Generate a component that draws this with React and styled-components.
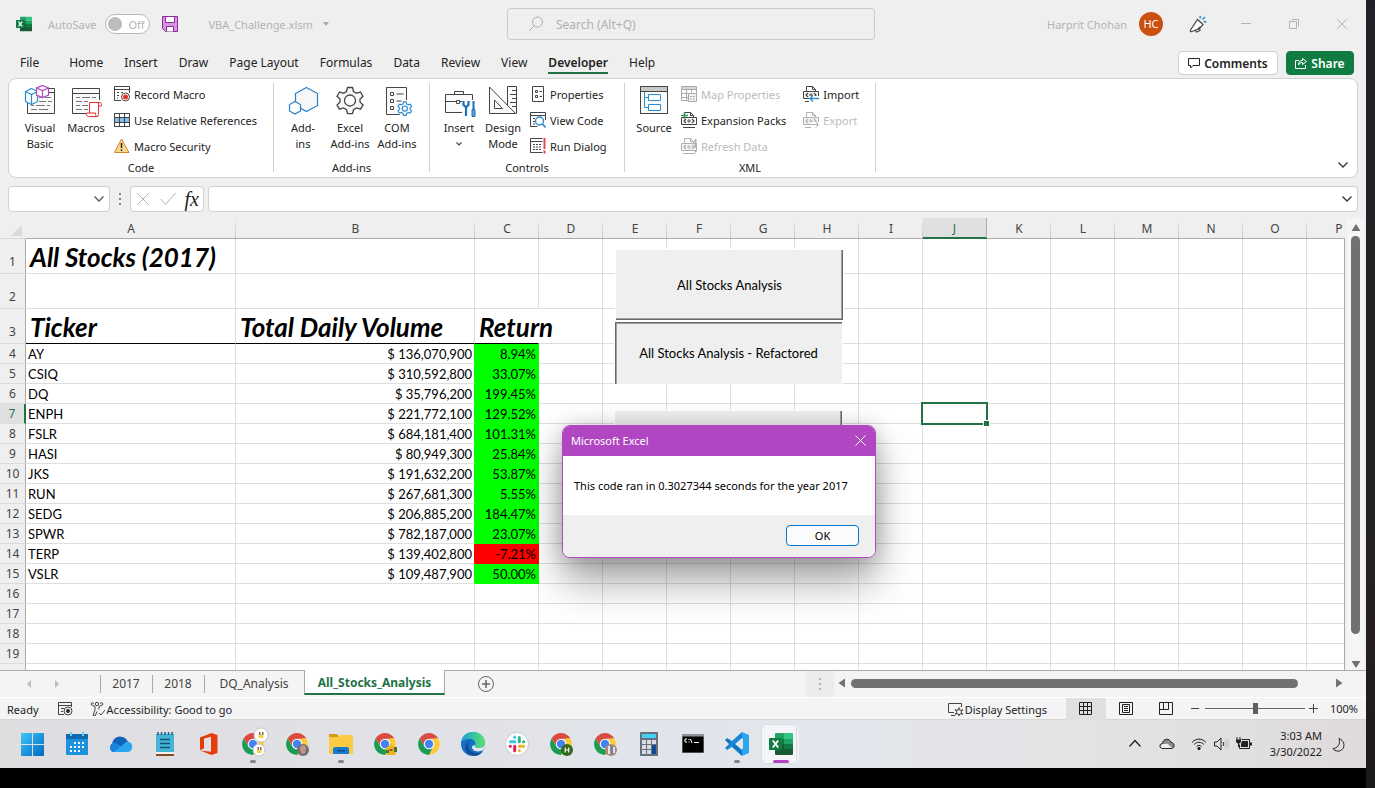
import React from "react";
import styled, { createGlobalStyle, css } from "styled-components";

const ui = `"Noto Sans", "Open Sans", sans-serif`;
const sheetFont = `Lato, "Noto Sans", sans-serif`;

const GlobalStyle = createGlobalStyle`
  *, *::before, *::after { box-sizing: border-box; }
  body { margin: 0; background: #000; font-family: ${ui}; font-size: 11px; color: #222; }
  button, input { font: inherit; color: inherit; margin: 0; padding: 0; border: 0; background: none; }
  button { white-space: nowrap; }
  svg { display: block; flex: none; }
`;

/* ---------- shell ---------- */

const Screen = styled.div`
  display: flex;
  height: 100vh;
  overflow: hidden;
`;

const Desktop = styled.div`
  flex: 1;
  min-width: 0;
  display: flex;
  flex-direction: column;
`;

const ScreenEdge = styled.div`
  width: 9px;
  background: linear-gradient(#202026, #222224 50%, #251f1f 80%, #1b1918);
`;

const Bezel = styled.div`
  height: 20px;
  background: #000;
`;

const Window = styled.main`
  position: relative;
  flex: 1;
  min-height: 0;
  display: flex;
  flex-direction: column;
  background: #efefef;
`;

/* ---------- title bar ---------- */

const TitleBar = styled.header`
  height: 48px;
  padding: 0 0 0 16px;
  display: grid;
  grid-template-columns: 1fr 368px 1fr;
  align-items: center;
  color: #b3b3b3;
  font-size: 12px;
`;

const TitleSide = styled.div`
  display: flex;
  align-items: center;
  ${(p) => p.$end && css`
    justify-content: flex-end;
    padding-right: 16px;
  `}
`;

const AutoSave = styled.label`
  display: flex;
  align-items: center;
  gap: 9px;
  margin: 0 12px 0 16px;
  font-size: 11px;
`;

const Pill = styled.span`
  display: flex;
  align-items: center;
  gap: 6px;
  width: 45px;
  height: 20px;
  padding: 0 2px;
  border: 1px solid #b9b9b9;
  border-radius: 10px;
  background: #fff;
`;

const Knob = styled.input`
  appearance: none;
  width: 14px;
  height: 14px;
  border-radius: 50%;
  background: #bcbcbc;
`;

const FileName = styled.button`
  display: flex;
  align-items: center;
  gap: 10px;
  margin-left: 30px;
  font-size: 11px;
`;

const SearchBox = styled.label`
  display: flex;
  align-items: center;
  gap: 12px;
  height: 32px;
  padding: 0 20px;
  border: 1px solid #c9c9c9;
  border-radius: 4px;
  input { flex: 1; min-width: 0; outline: 0; }
  input::placeholder { color: #b0b0b0; opacity: 1; }
`;

const UserName = styled.span`
  font-size: 11px;
  margin-right: 12px;
`;

const Avatar = styled.span`
  width: 24px;
  height: 24px;
  border-radius: 50%;
  background: #ca5010;
  color: #fff;
  font-size: 11px;
  line-height: 24px;
  text-align: center;
  margin-right: 11px;
`;

const WindowButton = styled.button`
  width: 48px;
  height: 32px;
  display: grid;
  place-items: center;
  &:last-child { width: 16px; margin-left: 16px; }
`;

/* ---------- ribbon ---------- */

const TabRow = styled.nav`
  height: 30px;
  padding: 0 12px 0 10px;
  display: flex;
  align-items: center;
  font-size: 12px;
`;

const RibbonTab = styled.button`
  height: 30px;
  padding: 0 10px;
  margin-right: ${(p) => (p.$first ? 10 : 1)}px;
  span { display: block; padding-top: 2px; line-height: 18px; border-bottom: 2px solid transparent; }
  ${(p) => p.$active && css`
    font-weight: 600;
    span { border-color: #217346; }
  `}
`;

const Spacer = styled.div`
  flex: 1;
`;

const ActionButton = styled.button`
  display: flex;
  align-items: center;
  justify-content: center;
  gap: 4px;
  height: 24px;
  width: ${(p) => (p.$primary ? 68 : 100)}px;
  margin-left: 8px;
  border: 1px solid ${(p) => (p.$primary ? "#107c41" : "#d0d0d0")};
  border-radius: 4px;
  background: ${(p) => (p.$primary ? "#107c41" : "#fff")};
  color: ${(p) => (p.$primary ? "#fff" : "#222")};
  font-weight: 600;
`;

const Ribbon = styled.section`
  position: relative;
  display: flex;
  height: 100px;
  margin: 0 8px 8px;
  padding: 2px 0 0;
  border: 1px solid #d1d1d1;
  border-radius: 8px;
  background: #fff;
`;

const Group = styled.div`
  width: ${(p) => p.$w}px;
  padding-left: ${(p) => p.$pad}px;
`;

const GroupBody = styled.div`
  display: flex;
  height: 79px;
  gap: ${(p) => p.$gap || 0}px;
`;

const GroupLabel = styled.div`
  margin-left: -${(p) => p.$pad}px;
  line-height: 16px;
  text-align: center;
`;

const Divider = styled.div`
  width: 1px;
  margin: 2px 0 5px;
  background: #d1d1d1;
`;

const BigButton = styled.button`
  width: ${(p) => p.$w || 46}px;
  padding-top: 3px;
  display: flex;
  flex-direction: column;
  align-items: center;
  gap: 4px;
  line-height: 16px;
  white-space: pre-line;
  svg { overflow: visible; }
`;

const SmallColumn = styled.div`
  display: flex;
  flex-direction: column;
  margin-left: ${(p) => p.$ml}px;
`;

const SmallButton = styled.button`
  height: 26px;
  display: flex;
  align-items: center;
  gap: 4px;
  color: ${(p) => (p.disabled ? "#bbb" : "#222")};
`;

const Collapse = styled.button`
  position: absolute;
  right: 8px;
  bottom: 8px;
`;

/* ---------- formula bar ---------- */

const FormulaRow = styled.div`
  display: flex;
  align-items: center;
  height: 26px;
  margin: 0 8px 6px;
`;

const Field = styled.div`
  display: flex;
  align-items: center;
  height: 26px;
  padding: 0 4px;
  border: 1px solid #d0d0d0;
  border-radius: 4px;
  background: #fff;
  ${(p) => (p.$w ? css`width: ${p.$w}px;` : css`flex: 1; margin-left: 4px;`)}
  justify-content: ${(p) => p.$justify || "flex-start"};
  input { flex: 1; min-width: 0; outline: 0; }
`;

const Grip = styled.div`
  width: 20px;
  display: grid;
  place-items: center;
`;

const Fx = styled.i`
  font: italic 400 20px/20px "Liberation Serif", serif;
  color: #222;
`;

/* ---------- worksheet ---------- */

const Work = styled.div`
  flex: 1;
  min-height: 0;
  display: flex;
`;

const SheetArea = styled.div`
  position: relative;
  flex: 1;
  min-width: 0;
  overflow: hidden;
  &::after {
    content: "";
    position: absolute;
    top: 20px;
    right: 0;
    bottom: 0;
    border-right: 1px solid #ababab;
  }
`;

const Grid = styled.table`
  table-layout: fixed;
  width: 1371px;
  border-collapse: separate;
  border-spacing: 0;
  font-family: ${sheetFont};
  font-size: 13px;
  color: #000;
  td, th { padding: 0; white-space: nowrap; }
`;

const ColHead = styled.th`
  height: 21px;
  border-bottom: 1px solid #ababab;
  background: linear-gradient(#efefef, #c4c4c4) right / 1px 100% no-repeat #efefef;
  font: 400 12px/18px ${ui};
  color: #444;
  && { padding-top: 2px; }
  ${(p) => p.$active && css`
    background: #e0e0e0;
    border-bottom: 2px solid #217346;
    border-right: 1px solid #ababab;
    color: #217346;
    line-height: 17px;
  `}
`;

const Corner = styled.th`
  height: 21px;
  border-bottom: 1px solid #d8d8d8;
  background: #efefef;
  svg { margin-left: 10px; margin-top: 5px; }
`;

const RowHead = styled.th`
  height: ${(p) => p.$h}px;
  vertical-align: bottom;
  border-right: 1px solid #ababab;
  border-bottom: 1px solid #dcdcdc;
  background: #efefef;
  font: 400 12px/${(p) => (p.$h > 20 ? 22 : 18)}px ${ui};
  color: #444;
  ${(p) => p.$active && css`
    background: #e0e0e0;
    border-right: 2px solid #217346;
    color: #217346;
  `}
`;

const Cell = styled.td`
  position: relative;
  background: ${(p) => p.$fill || "#fff"};
  border-right: 1px solid ${(p) => p.$edge || p.$fill || "#dedede"};
  border-bottom: 1px solid ${(p) => (p.$rule ? "#000" : p.$fill || "#dedede")};
  vertical-align: bottom;
  line-height: 18px;
  text-align: ${(p) => (p.$num ? "right" : "left")};
  && { padding: ${(p) => (p.$title ? "0 4px" : "0 2px")}; }
  ${(p) => p.$title && css`
    font-size: 26px;
    font-weight: 700;
    font-style: italic;
    line-height: 32px;
  `}
  ${(p) => p.$spill && css`z-index: 1;`}
`;

const Selection = styled.span`
  position: absolute;
  inset: -2px;
  z-index: 1;
  border: 2px solid #217346;
  &::after {
    content: "";
    position: absolute;
    right: -4px;
    bottom: -4px;
    width: 7px;
    height: 7px;
    border: 1px solid #fff;
    background: #217346;
  }
`;

const FormButton = styled.button`
  position: absolute;
  z-index: 2;
  left: ${(p) => p.$x}px;
  top: ${(p) => p.$y}px;
  width: ${(p) => p.$w}px;
  height: ${(p) => p.$h}px;
  background: #efefef;
  color: #000;
  font-family: ${sheetFont};
  font-size: 13px;
  outline: 1px solid #fff;
  ${(p) => (p.$pressed
    ? css`box-shadow: inset 1px 1px #696969, inset 2px 2px #a0a0a0;`
    : css`box-shadow: inset -1px -1px #696969, inset -2px -2px #a0a0a0;`)}
`;

const VScroll = styled.div`
  width: 21px;
  padding: 5px 6px 1px;
  display: flex;
  flex-direction: column;
  align-items: center;
  background: linear-gradient(#f5f5f5, #f5f5f5) center / 17px 100% no-repeat;
`;

const VThumb = styled.div`
  flex: 398;
  width: 9px;
  margin-top: 3px;
  border-radius: 5px;
  background: #717171;
`;

const VRest = styled.div`
  flex: 25;
`;

/* ---------- sheet tabs ---------- */

const SheetBar = styled.nav`
  display: flex;
  height: 28px;
  border-top: 1px solid #ababab;
  border-bottom: 1px solid #fff;
  background: #f4f4f4;
  font-size: 12px;
  color: #444;
`;

const SheetNav = styled.div`
  display: flex;
  align-items: center;
  justify-content: center;
  gap: 18px;
  width: 100px;
  padding-right: 14px;
`;

const SheetTab = styled.button`
  width: ${(p) => p.$w}px;
  position: relative;
  line-height: 24px;
  &::before {
    content: "";
    position: absolute;
    left: 0;
    top: 4px;
    height: 18px;
    border-left: 1px solid #ababab;
  }
  ${(p) => p.$active && css`
    height: 25px;
    margin-top: -1px;
    padding-top: 2px;
    line-height: 20px;
    background: #fff;
    border: 1px solid #ababab;
    border-width: 0 1px 2px;
    border-bottom-color: #217346;
    color: #217346;
    font-weight: 700;
    &::before { display: none; }
  `}
`;

const AddSheet = styled.button`
  margin-left: 33px;
  height: 26px;
`;

const Splitter = styled.div`
  width: 28px;
  display: grid;
  place-items: center;
  background: #ececec;
`;

const HScroll = styled.div`
  width: 513px;
  margin-right: 19px;
  padding: 0 3px 2px;
  display: flex;
  align-items: center;
`;

const HThumb = styled.div`
  flex: 447;
  height: 9px;
  margin-left: 4px;
  border-radius: 5px;
  background: #717171;
`;

const HRest = styled.div`
  flex: 36;
`;

/* ---------- status bar ---------- */

const StatusBar = styled.footer`
  height: 22px;
  padding: 0 8px 0 7px;
  display: flex;
  align-items: center;
  background: #f4f4f4;
  border-bottom: 1px solid #d6d6d6;
`;

const StatusItem = styled.button`
  display: flex;
  align-items: center;
  gap: 2px;
  margin-left: ${(p) => p.$ml || 0}px;
`;

const StatusText = styled.span`
  padding-top: 2px;
`;

const ViewButton = styled.button`
  width: 40px;
  height: 22px;
  display: grid;
  place-items: center;
  background: ${(p) => (p.$active ? "#e0e0e0" : "transparent")};
`;

const ViewGroup = styled.div`
  display: flex;
  margin: 0 4px 0 19px;
`;

const ZoomRange = styled.input`
  appearance: none;
  width: 100px;
  height: 12px;
  margin: 0 4px;
  &::-webkit-slider-runnable-track { height: 1px; background: #666; }
  &::-webkit-slider-thumb {
    appearance: none;
    width: 5px;
    height: 11px;
    margin-top: -5px;
    background: #5e5e5e;
  }
`;

const ZoomValue = styled.span`
  width: 40px;
  text-align: right;
`;

/* ---------- dialog ---------- */

const Dialog = styled.section`
  position: absolute;
  z-index: 5;
  left: 562px;
  top: 425px;
  width: 314px;
  border: 1px solid #b146c2;
  border-radius: 8px;
  overflow: hidden;
  background: #fff;
  box-shadow: 0 24px 40px rgba(0, 0, 0, 0.34), 0 2px 22px rgba(0, 0, 0, 0.2);
`;

const DialogTitle = styled.div`
  display: flex;
  align-items: center;
  justify-content: space-between;
  height: 30px;
  padding: 0 9px 2px 8px;
  background: #b146c2;
  color: #fff;
`;

const DialogText = styled.p`
  margin: 0;
  padding: 0 11px;
  line-height: 59px;
  white-space: nowrap;
  color: #000;
`;

const DialogFooter = styled.div`
  display: flex;
  justify-content: flex-end;
  padding: 10px 16px 11px;
  background: #efefef;
`;

const OkButton = styled.button`
  width: 73px;
  height: 21px;
  border: 1px solid #0078d4;
  border-radius: 4px;
  background: #fbfbfb;
  color: #000;
`;

/* ---------- taskbar ---------- */

const Taskbar = styled.nav`
  height: 48px;
  padding: 0 20px 0 11px;
  display: flex;
  align-items: center;
  background: linear-gradient(90deg, #dfdde0, #e1e2e7 30%, #e2e6ed 58%, #e4e4e7 75%, #dfdbdc);
`;

const Task = styled.button`
  position: relative;
  width: 44px;
  height: 48px;
  display: grid;
  place-items: center;
  svg { z-index: 1; overflow: visible; }
  ${(p) => p.$running && css`
    &::after {
      content: "";
      position: absolute;
      bottom: 5px;
      left: ${p.$active ? 14 : 19}px;
      width: ${p.$active ? 16 : 6}px;
      height: 3px;
      border-radius: 2px;
      background: ${p.$active ? "#b146c2" : "#858588"};
    }
  `}
  ${(p) => p.$active && css`
    &::before {
      content: "";
      position: absolute;
      inset: 5px 7px 5px 3px;
      border-radius: 4px;
      background: #f4f5f8;
      box-shadow: 0 0 0 1px #dadce1, 3px 0 0 0 #f0f1f5;
    }
  `}
`;

const Tray = styled.div`
  display: flex;
  align-items: center;
  gap: ${(p) => p.$gap}px;
`;

const Clock = styled.time`
  width: 64px;
  margin: 0 9px 0 5px;
  line-height: 16px;
  text-align: right;
  white-space: pre;
`;

/* ---------- icons ---------- */

const Icon = ({ w = 16, h = w, stroke = "#444", children, ...rest }) => (
  <svg width={w} height={h} viewBox={`0 0 ${w} ${h}`} fill="none" stroke={stroke} aria-hidden="true" {...rest}>
    {children}
  </svg>
);

const Chevron = ({ stroke = "#333" }) => (
  <Icon w={12} h={8} stroke={stroke}><path d="M1.500 1.500 6 6l4.500-4.500" strokeWidth="1.300" /></Icon>
);

const ExcelLogo = ({ size }) => (
  <svg width={size} height={size} viewBox="0 0 24 24" aria-hidden="true">
    <path d="M7 1h8v6H6V2a1 1 0 0 1 1-1z" fill="#21a366" />
    <path d="M15 1h8a1 1 0 0 1 1 1v5h-9z" fill="#33c481" />
    <path d="M6 7h9v5H6z" fill="#107c41" />
    <path d="M15 7h9v5h-9z" fill="#21a366" />
    <path d="M6 12h9v6H6z" fill="#185c37" />
    <path d="M15 12h9v6h-9z" fill="#107c41" />
    <path d="M6 17h18v5a1 1 0 0 1-1 1H7a1 1 0 0 1-1-1z" fill="#185c37" />
    <rect y="6" width="13" height="12" rx="1" fill="#107c41" />
    <path d="m3.800 8.500 5.400 7M9.200 8.500l-5.400 7" stroke="#fff" strokeWidth="1.900" />
  </svg>
);

const SaveIcon = () => (
  <Icon stroke="#8e2a9e">
    <path d="M.5.5h15v15h-12l-3-3z" fill="#d594dd" />
    <path d="M3.500.5h9v6h-9z" fill="#fff" />
    <path d="M4.500 15.500v-5h7v5" fill="#fff" />
  </Icon>
);

const SearchIcon = () => (
  <Icon stroke="#b0b0b0"><circle cx="9.500" cy="6" r="5" /><path d="M6 10 1 15" /></Icon>
);

const PenIcon = () => (
  <Icon w={18} stroke="#444">
    <path d="M8.500 4.500 14 9.500l-3.500 4L3 16.500c-1.500.5-2-.5-1.500-1.500z" fill="#fff" strokeWidth="1.200" />
    <path d="m6 15 1.500 2 3.500-1.500-.5-2.500M8.500 14.500 11 12" strokeWidth="1.200" />
    <path d="M11.500 3.500 11 1M13.500 4.500 16 2M14.500 6.500l3 .5" stroke="#2a8dd4" strokeWidth="1.500" />
  </Icon>
);

const VisualBasicIcon = () => (
  <Icon w={32}>
    <path d="M14 4.500h16.500v25h-27V13" fill="#fafafa" />
    <path d="M25 8.500h5" />
    <path d="M15 13.500h4m2 0h6M15 17.500h7m2 0h4M7 21.500h3m2 0h9m2 0h3M7 25.500h6m2 0h9" stroke="#777" />
    <path d="m7.500 4.500 6 3v10l-6 3-6-3v-10z" fill="#fff" stroke="#2a8dd4" strokeWidth="1.200" />
    <path d="m1.500 7.500 6 3 6-3M7.500 10.500v10" stroke="#2a8dd4" strokeWidth="1.200" />
    <path d="m18.500 1.500 6 2.500v7l-6 2.500-6-2.500V4z" fill="#fff" stroke="#b146c2" strokeWidth="1.200" />
    <path d="m12.500 4 6 2.500 6-2.500M18.500 6.500v7" stroke="#b146c2" strokeWidth="1.200" />
  </Icon>
);

const MacrosIcon = () => (
  <Icon w={32}>
    <path d="M2.500 4.500h27v25h-27z" fill="#fafafa" />
    <path d="M2.500 9.500h27" />
    <path d="M6 13.500h4m2 0h8m2 0h4M6 17.500h6m2 0h6M6 21.500h4m2 0h6M6 25.500h6m2 0h4" stroke="#777" />
    <path d="M31 16h-13v12h-2v5h16z" fill="#fff" stroke="none" />
    <path d="M19.500 29V18.500h9v12c0 3-3 2-3 0v-1.500h-9c0 2 0 3.500 2 3.500h9.500M28.500 22h3c0-2.500 0-3.500-2.500-3.500h-8" stroke="#e8302f" fill="#fff" />
  </Icon>
);

const RecordIcon = () => (
  <Icon>
    <path d="M7 14.500H.5v-14h15V7" /><path d="M0 3.500h15.500M3 6.500h2m2 0h2M3 9.500h2M3 12h1" />
    <circle cx="11.500" cy="11" r="4" fill="#fff" /><circle cx="11.500" cy="11" r="2.500" fill="#e8302f" stroke="none" />
  </Icon>
);

const RelativeIcon = () => (
  <Icon h={14}>
    <path d="M.5.5h15v13H.5z" fill="#fff" />
    <path d="M1 5h14v4H1z" fill="#83beec" stroke="none" />
    <path d="M5.500.5v13M10.500.5v13M.5 4.500h15M.5 9.500h15" />
    <path d="M.5.5h15v13H.5z" />
  </Icon>
);

const WarningIcon = () => (
  <Icon stroke="#d9822b">
    <path d="M7.500 1 15 14.500H.5z" fill="#f8d98b" />
    <path d="M7.500 5v5M7.500 11.500v1.500" stroke="#222" strokeWidth="1.500" />
  </Icon>
);

const HexIcon = () => (
  <Icon w={32} stroke="#2a7fc9">
    <path d="m19.500 3.500 11 6v12l-11 6-11-6v-12z" fill="#f7f7f7" strokeWidth="1.200" />
    <path d="m8 17.500 5.500 3v6.500L8 30l-5.500-3v-6.500z" fill="#fff" strokeWidth="1.200" />
  </Icon>
);

const gearPath = "M13.500 3.500h5l1 4 3 1.700 4-1.200 2.500 4.300-3 2.700v3l3 3-2.500 4.200-4-1.200-3 1.700-1 4h-5l-1-4-3-1.700-4 1.200L3 21l3-3v-3l-3-2.700L5.500 8l4 1.200 3-1.700z";

const GearIcon = () => (
  <Icon w={32}><path d={gearPath} fill="#f7f7f7" strokeWidth="1.300" /><circle cx="16" cy="16.500" r="5.500" fill="#fff" strokeWidth="1.300" /></Icon>
);

const ComIcon = () => (
  <Icon w={32}>
    <path d="M25.500 16V3.500h-20v27h13" fill="#fafafa" />
    <path d="M9.500 8.500h3v3h-3zM9.500 15.500h3v3h-3zM9.500 22.500h3v3h-3zM15.500 10h7M15.500 17h5" />
    <g transform="translate(15.500 16) scale(.52)" stroke="#2a8dd4" strokeWidth="2.200">
      <path d={gearPath} fill="#fff" /><circle cx="16" cy="16.500" r="5" />
    </g>
  </Icon>
);

const ToolboxIcon = () => (
  <Icon w={32}>
    <path d="M2.500 10.500h27v18h-27z" fill="#fafafa" />
    <path d="M11.500 10.500v-3h9v3M2.500 17.500h11M17 17.500h3" /><path d="M13.500 16.500h3v3h-3z" />
    <path d="M19 16h14v18H19z" fill="#fff" stroke="none" />
    <path d="M20.500 17v4l2.500 2 2.500-2v-4M23 22v10" stroke="#1f6fb8" strokeWidth="2.200" />
    <path d="M30.500 17v8" stroke="#1f6fb8" strokeWidth="2" /><path d="M29 25.500h3v7h-3z" fill="#5ba3dd" stroke="#1f6fb8" />
  </Icon>
);

const DesignIcon = () => (
  <Icon w={32}>
    <path d="M20.500 2.500h9v27h-9z" fill="#fafafa" /><path d="M2.500 3v26.500h26z" fill="#fafafa" />
    <path d="M7.500 16v8.500h8z" fill="#fff" />
    <path d="M25 6.500h4M23 10.500h6M25 14.500h4M23 18.500h6M25 22.500h4" />
  </Icon>
);

const PropertiesIcon = () => (
  <Icon><path d="M2.500.5h11v15h-11z" /><path d="M5.500 4.500h2v2h-2zM5.500 9.500h2v2h-2zM9.500 5.500H12M9.500 10.500H12" /></Icon>
);

const ViewCodeIcon = () => (
  <Icon>
    <path d="M15.500 8V.5H.5v14h7" /><path d="M.5 3.500h15M3 6.500h2M3 9.500h2M3 12h2" />
    <circle cx="9.500" cy="9" r="4" stroke="#2a8dd4" fill="#fff" strokeWidth="1.400" /><path d="m12.500 12 3 3.500" stroke="#2a8dd4" strokeWidth="1.600" />
  </Icon>
);

const RunDialogIcon = () => (
  <Icon>
    <path d="M12.500.5H.5v14h12" /><path d="M.5 3.500h12M3 6.500h2m1 0h2m1 0h2M3 9h2m1 0h2m1 0h2M3 11.500h2m1 0h2m1 0h2" />
    <path d="M14.500 0v11M14.500 12.500v3" stroke="#e5484d" strokeWidth="2" />
  </Icon>
);

const SourceIcon = () => (
  <Icon w={32}>
    <path d="M2.500 2.500h27v27h-27z" fill="#fafafa" /><path d="M3 3h26v4H3z" fill="#c8c8c8" stroke="none" />
    <path d="M2.500 2.500h27v27h-27zM2.500 7.500h27" />
    <path d="M6.500 8v15.500h4M6.500 13.500h4" stroke="#2a8dd4" />
    <path d="M10.500 10.500h12v6h-12zM10.500 20.500h12v6h-12z" stroke="#2a8dd4" fill="#fff" />
  </Icon>
);

const MapPropsIcon = () => (
  <Icon stroke="#a9a9a9">
    <path d="M.5.5h15v14H.5z" /><path d="M1 1h14v2H1z" fill="#d5d5d5" stroke="none" /><path d="M.5 3.500h15M.5 7.500H7M.5 11.500H7M5.500 3.500v11M10.500 3.500v3" />
    <path d="M7.500 7.500h8v8h-8z" fill="#f4f4f4" /><path d="M9 10.500h2m1 0h2M9 13h2m1 0h2" />
  </Icon>
);

const XmlIcon = ({ stroke = "#444", kind }) => (
  <Icon stroke={stroke}>
    <path d="M3.500 5.500v-5h6l3 3v2M9.500.5v3h3" />
    <path d="M.5 5.500h15v7H.5z" fill={kind === "plus" ? "#fff" : "#f4f4f4"} /><path d="M2 15.500h12" />
    <path d="m5 7-2 2 2 2M11 7l2 2-2 2" strokeWidth="1.200" /><circle cx="8" cy="9" r="1.200" />
    {kind === "plus" && <path d="M3.500 0v7M0 3.500h7" stroke="#2f9e57" strokeWidth="1.500" />}
    {kind === "import" && <><path d="M6 10h10v6H6z" fill="#fff" stroke="none" /><path d="M16 12.500H7m3-3-3 3 3 3" stroke="#2a8dd4" strokeWidth="1.300" /></>}
    {kind === "export" && <><path d="M8 10h8v6H8z" fill="#fff" stroke="none" /><path d="M8 12.500h7m-2.500-3 3 3-3 3" /></>}
    {kind === "refresh" && <path d="M14.500 1v9M14.500 12v2.500" strokeWidth="2" />}
  </Icon>
);

const Dots = ({ color = "#888" }) => (
  <Icon w={2} h={12} stroke="none"><path d="M0 0h2v2H0zM0 5h2v2H0zM0 10h2v2H0z" fill={color} /></Icon>
);

const arrows = {
  up: "M5 1 9.500 8h-9z",
  down: "M5 9 .5 2h9z",
  left: "M1.500 5 8 .500v9z",
  right: "M8.500 5 2 .500v9z",
  prev: "M3 5l4-4v8z",
  next: "M7 5 3 1v8z",
};

const Arrow = ({ dir, color = "#717171" }) => (
  <Icon w={10} stroke="none"><path d={arrows[dir]} fill={color} /></Icon>
);

/* taskbar icons */

const Chrome = ({ children }) => (
  <svg width="24" height="24" viewBox="0 0 24 24" aria-hidden="true">
    <circle cx="12" cy="12" r="11" fill="#fff" />
    <path d="M2.500 6.500A11 11 0 0 1 21.500 6.500L12 7 7.500 14.500z" fill="#da4b40" />
    <path d="M21.500 6.500A11 11 0 0 1 12 23l4.500-8.500L12 7z" fill="#fcca3f" />
    <path d="M12 23A11 11 0 0 1 2.500 6.500l5 8 4.500 2.500 3.500-1z" fill="#1a9c52" />
    <circle cx="12" cy="12" r="5.200" fill="#fff" />
    <circle cx="12" cy="12" r="4.200" fill="#4284f3" />
    {children}
  </svg>
);

const taskIcons = [
  { name: "Start", icon: (
    <svg width="24" height="24" viewBox="0 0 24 24">
      <defs><linearGradient id="win" x1="0" y1="0" x2="1" y2="1"><stop stopColor="#3fc7f8" /><stop offset="1" stopColor="#0067c0" /></linearGradient></defs>
      <path d="M0 1h11v11H0zM12 1h11v11H12zM0 13h11v11H0zM12 13h11v11H12z" fill="url(#win)" />
    </svg>) },
  { name: "Calendar", icon: (
    <svg width="24" height="24" viewBox="0 0 24 24">
      <rect x="1" y="2" width="22" height="21" rx="1" fill="#1d93dd" /><path d="M1 2h22v5H1z" fill="#1269ae" />
      <path d="M5 0h2v4H5zM17 0h2v4h-2z" fill="#5fd1f5" />
      <path d="M9 10h2v2H9zM13 10h2v2h-2zM17 10h2v2h-2zM5 14h2v2H5zM9 14h2v2H9zM13 14h2v2h-2zM17 14h2v2h-2zM5 18h2v2H5zM9 18h2v2H9zM13 18h2v2h-2z" fill="#fff" />
    </svg>) },
  { name: "OneDrive", icon: (
    <svg width="24" height="24" viewBox="0 0 24 24">
      <path d="M3 12C4 6 9 3 14 5c3 1 4 3 5 5l-9 6-8 2z" fill="#0f64b8" /><path d="M1 15c0-3 3-5 6-4l8 5-10 4C2 20 1 18 1 15z" fill="#1684dc" />
      <path d="M5 20 17 10c4-1 7 2 6 6-1 3-2 4-5 4z" fill="#2ba5ee" />
    </svg>) },
  { name: "Notepad", icon: (
    <svg width="24" height="24" viewBox="0 0 24 24">
      <path d="M3 2h18v18H3z" fill="#45b4d6" /><path d="M3 20h18v2H3z" fill="#f3f3f3" /><path d="M3 22h18v2H3z" fill="#8a4a1b" />
      <path d="M5 0v3M8.500 0v3M12 0v3M15.500 0v3M19 0v3" stroke="#155e7c" strokeWidth="1.500" /><path d="M7 7.500h10M7 11.500h10M7 15.500h10" stroke="#125577" strokeWidth="1.500" />
    </svg>) },
  { name: "Office", icon: (
    <svg width="24" height="24" viewBox="0 0 24 24"><path d="M3 5.500 14.500 1l6 2v18l-6 2L3 18.500l11 1.200V4.800L7 6.500v10L3 18z" fill="#e43c0b" /></svg>) },
  { name: "Chrome profile 1", running: true, icon: (
    <Chrome>
      <g stroke="#c4c4c4" fill="#fff"><circle cx="20" cy="3" r="7" /><circle cx="18" cy="18" r="6" /></g>
      <path d="M17.500 3h5v3h-5zM16 18h4.500v3H16z" fill="#f1d249" /><path d="M18 0h1.500v3H18zM21 0h1.500v3H21zM16.500 15H18v3h-1.500zM19 15h1.500v3H19z" fill="#8c6a4f" />
    </Chrome>) },
  { name: "Chrome profile 2", icon: (
    <Chrome><circle cx="18" cy="18" r="6" fill="#75706f" /><path d="M15 15c2-3 6-2 6 1l-1 5-3 1c-2-2-2-5-2-7z" fill="#c0948a" /></Chrome>) },
  { name: "File Explorer", running: true, icon: (
    <svg width="26" height="24" viewBox="0 0 26 24">
      <path d="M1 2h8l2 3h-10z" fill="#d99b08" /><path d="M1 5h9l2-2h13v19H1z" fill="#fbcb43" /><path d="M5 17a2 2 0 0 1 2-2h12a2 2 0 0 1 2 2v5H5z" fill="#1a7ad0" /><path d="M9 18h8v1.500H9z" fill="#0d4f97" />
    </svg>) },
  { name: "Chrome profile 3", icon: (
    <Chrome><path d="m12 17 6-5 6 5-2 6h-8z" fill="#e9b425" /><path d="M13 18h3v3h-3zM21 15h3v5h-3z" fill="#447a2b" /><path d="M16.500 17h3v2h-3z" fill="#b14a22" /></Chrome>) },
  { name: "Chrome", icon: <Chrome /> },
  { name: "Edge", icon: (
    <svg width="24" height="24" viewBox="0 0 24 24">
      <defs><linearGradient id="edge"><stop stopColor="#159fdd" /><stop offset="1" stopColor="#5be26a" /></linearGradient></defs>
      <circle cx="12" cy="12" r="12" fill="#1570c4" />
      <path d="M0 11C1 3 7 0 12 0c7 0 12 5 12 10 0 4-3 6-6 6-3 0-5-1-4-3 1-3-1-6-5-6-5 0-8 2-9 4z" fill="url(#edge)" />
      <path d="M9 8c-4 4-2 12 5 13 4 1 7-1 8-2-3 5-9 6-14 3-5-3-5-10 1-14z" fill="#0e4d94" />
      <path d="M14 13c-1 2 1 3 4 3 2 0 5-1 6-4 0 3-1 5-2 6-5 3-11 1-11-3 0-1 1-2 3-2z" fill="#e3e6ec" />
    </svg>) },
  { name: "Slack", icon: (
    <svg width="24" height="24" viewBox="0 0 24 24">
      <circle cx="12" cy="12" r="11.500" fill="#fff" stroke="#ccc" />
      <g strokeWidth="3" strokeLinecap="round" fill="none">
        <path d="M5.500 9.700h4.500M9.700 5v.2" stroke="#36c5f0" /><path d="M14.300 5.500v4.300M18.800 9.700h-.2" stroke="#2eb67d" />
        <path d="M14.300 14.300h4.500M14.300 18.800v-.2" stroke="#ecb22e" /><path d="M9.700 14.300v4.500M5.200 14.300h.2" stroke="#e01e5a" />
      </g>
    </svg>) },
  { name: "Chrome profile H", icon: (
    <Chrome><circle cx="18" cy="18" r="6" fill="#33691e" /><path d="M16.200 15.500v5M19.800 15.500v5M16.200 18h3.600" stroke="#fff" strokeWidth="1.100" /></Chrome>) },
  { name: "Chrome profile 4", icon: (
    <Chrome><circle cx="18" cy="18" r="6" fill="#b08878" /><path d="M15 14h2v8h-2z" fill="#e6e3e3" /><path d="M18 14h2v8h-2z" fill="#5d86b8" /><path d="M20 15h2v6h-2z" fill="#e9e2dc" /></Chrome>) },
  { name: "Calculator", icon: (
    <svg width="24" height="24" viewBox="0 0 24 24">
      <rect x="3" width="18" height="24" rx="1" fill="#67717d" /><path d="M5 2h14v4H5z" fill="#45d1f5" />
      <path d="M5 8h4v4H5zM10 8h4v4h-4zM15 8h4v4h-4zM5 13h4v4H5zM10 13h4v4h-4zM5 18h4v4H5zM10 18h4v4h-4z" fill="#d7dde3" /><path d="M15 13h4v9h-4z" fill="#0e4a90" />
    </svg>) },
  { name: "Command Prompt", icon: (
    <svg width="24" height="24" viewBox="0 0 24 24"><path d="M1 2h22v19H1z" fill="#8f9398" /><path d="M1.500 4.500h21v16h-21z" fill="#000" /><path d="M6 7H4v3h2M8 7v1M8 9.500v1M9.500 7l1.500 4M13 10.500h5" stroke="#fff" fill="none" /></svg>) },
  { name: "Visual Studio Code", running: true, icon: (
    <svg width="24" height="24" viewBox="0 0 24 24"><path d="m17 0 7 3v18l-7 3V17l1-1V7l-1-1z" fill="#2aa5f0" /><path d="m0 8 2-2 4 2.500L17 18v6L6.500 14.500z" fill="#0c78c4" /><path d="m0 16 2 2 4-2.500L17 6V0L6.500 9.500z" fill="#1687d6" /></svg>) },
  { name: "Excel", running: true, active: true, icon: <ExcelLogo size={24} /> },
];

/* ---------- data ---------- */

const ribbonTabs = ["File", "Home", "Insert", "Draw", "Page Layout", "Formulas", "Data", "Review", "View", "Developer", "Help"];
const columns = "ABCDEFGHIJKLMNOP".split("");
const stocks = [
  ["AY", "136,070,900", "8.94%"],
  ["CSIQ", "310,592,800", "33.07%"],
  ["DQ", "35,796,200", "199.45%"],
  ["ENPH", "221,772,100", "129.52%"],
  ["FSLR", "684,181,400", "101.31%"],
  ["HASI", "80,949,300", "25.84%"],
  ["JKS", "191,632,200", "53.87%"],
  ["RUN", "267,681,300", "5.55%"],
  ["SEDG", "206,885,200", "184.47%"],
  ["SPWR", "782,187,000", "23.07%"],
  ["TERP", "139,402,800", "-7.21%"],
  ["VSLR", "109,487,900", "50.00%"],
];
const lastNumberedRow = 19;
const rowNumbers = Array.from({ length: lastNumberedRow + 1 }, (_, i) => i + 1);

function cellProps(row, col) {
  if (row === 1 && col === "A") return { $title: true, $spill: true, children: "All Stocks (2017)" };
  if (row === 3 && "ABC".includes(col)) {
    const text = { A: "Ticker", B: "Total Daily Volume", C: "Return" }[col];
    return { $title: true, $rule: true, $spill: true, $edge: col === "C" ? "#fff" : undefined, children: text };
  }
  const stock = row > 3 ? stocks[row - 4] : undefined;
  if (stock) {
    const fill = stock[2].startsWith("-") ? "#ff0000" : "#00ff00";
    if (col === "A") return { children: stock[0] };
    if (col === "B") return { $num: true, $edge: fill, children: `$\u00a0${stock[1]}` };
    if (col === "C") return { $num: true, $fill: fill, children: stock[2] };
  }
  if (row === 7 && col === "J") return { children: <Selection /> };
  return {};
}

const RibbonGroup = ({ label, w, pad, gap, children }) => (
  <>
    <Group $w={w} $pad={pad}>
      <GroupBody $gap={gap}>{children}</GroupBody>
      <GroupLabel $pad={pad}>{label}</GroupLabel>
    </Group>
    <Divider />
  </>
);

const Big = ({ icon, label, w, children }) => (
  <BigButton type="button" $w={w}>{icon}<span>{label}{children}</span></BigButton>
);

const Small = ({ icon, label, disabled }) => (
  <SmallButton type="button" disabled={disabled}>{icon}{label}</SmallButton>
);

const InsertMark = styled.span`
  display: grid;
  place-items: center;
  height: 16px;
`;

export default function App() {
  return (
    <Screen>
      <GlobalStyle />
      <Desktop>
        <Window>
          <TitleBar>
            <TitleSide>
              <ExcelLogo size={16} />
              <AutoSave>AutoSave<Pill><Knob type="checkbox" role="switch" />Off</Pill></AutoSave>
              <button type="button" aria-label="Save"><SaveIcon /></button>
              <FileName type="button">VBA_Challenge.xlsm<Icon w={6} h={4} stroke="none"><path d="M0 0h6L3 4z" fill="#aaa" /></Icon></FileName>
            </TitleSide>
            <SearchBox><SearchIcon /><input type="text" placeholder="Search (Alt+Q)" /></SearchBox>
            <TitleSide $end>
              <UserName>Harprit Chohan</UserName>
              <Avatar>HC</Avatar>
              <WindowButton type="button" aria-label="Coming soon"><PenIcon /></WindowButton>
              <WindowButton type="button" aria-label="Minimize"><Icon w={10} stroke="#b5b5b5"><path d="M0 4.500h10" /></Icon></WindowButton>
              <WindowButton type="button" aria-label="Restore"><Icon w={10} stroke="#b5b5b5"><path d="M.5 2.500h7v7h-7zM2.500.5h7v7" /></Icon></WindowButton>
              <WindowButton type="button" aria-label="Close"><Icon w={10} stroke="#b5b5b5"><path d="m0 0 10 10M10 0 0 10" /></Icon></WindowButton>
            </TitleSide>
          </TitleBar>

          <TabRow>
            {ribbonTabs.map((t) => (
              <RibbonTab key={t} type="button" $first={t === "File"} $active={t === "Developer"}><span>{t}</span></RibbonTab>
            ))}
            <Spacer />
            <ActionButton type="button"><Icon w={12} stroke="#222"><path d="M.5 1.500h11v7H5l-2.500 2.500V8.500h-2z" /></Icon>Comments</ActionButton>
            <ActionButton type="button" $primary><Icon w={12} stroke="#fff"><path d="M4 3.500H.5v8h10V8" /><path d="M3.500 8c0-3 1.500-4.500 4-4.500v-2l4 3-4 3v-2c-2 0-3 .5-4 2.500z" /></Icon>Share</ActionButton>
          </TabRow>

          <Ribbon>
            <RibbonGroup label="Code" w={264} pad={8}>
              <Big icon={<VisualBasicIcon />} label={"Visual\nBasic"} />
              <Big icon={<MacrosIcon />} label="Macros" />
              <SmallColumn $ml={5}>
                <Small icon={<RecordIcon />} label="Record Macro" />
                <Small icon={<RelativeIcon />} label="Use Relative References" />
                <Small icon={<WarningIcon />} label="Macro Security" />
              </SmallColumn>
            </RibbonGroup>
            <RibbonGroup label="Add-ins" w={155} pad={6} gap={1}>
              <Big icon={<HexIcon />} label={"Add-\nins"} />
              <Big icon={<GearIcon />} label={"Excel\nAdd-ins"} />
              <Big icon={<ComIcon />} label={"COM\nAdd-ins"} />
            </RibbonGroup>
            <RibbonGroup label="Controls" w={194} pad={7}>
              <Big w={44} icon={<ToolboxIcon />} label="Insert"><InsertMark><Icon w={6} h={4}><path d="m.5.500 2.500 2.500L5.500.500" strokeWidth="1.200" /></Icon></InsertMark></Big>
              <Big w={44} icon={<DesignIcon />} label={"Design\nMode"} />
              <SmallColumn $ml={5}>
                <Small icon={<PropertiesIcon />} label="Properties" />
                <Small icon={<ViewCodeIcon />} label="View Code" />
                <Small icon={<RunDialogIcon />} label="Run Dialog" />
              </SmallColumn>
            </RibbonGroup>
            <RibbonGroup label="XML" w={250} pad={6}>
              <Big icon={<SourceIcon />} label="Source" />
              <SmallColumn $ml={4}>
                <Small icon={<MapPropsIcon />} label="Map Properties" disabled />
                <Small icon={<XmlIcon kind="plus" />} label="Expansion Packs" />
                <Small icon={<XmlIcon kind="refresh" stroke="#b0b0b0" />} label="Refresh Data" disabled />
              </SmallColumn>
              <SmallColumn $ml={17}>
                <Small icon={<XmlIcon kind="import" />} label="Import" />
                <Small icon={<XmlIcon kind="export" stroke="#b0b0b0" />} label="Export" disabled />
              </SmallColumn>
            </RibbonGroup>
            <Collapse type="button" aria-label="Collapse ribbon"><Chevron /></Collapse>
          </Ribbon>

          <FormulaRow>
            <Field $w={102}><input type="text" aria-label="Name box" /><Chevron stroke="#555" /></Field>
            <Grip><Dots /></Grip>
            <Field $w={74} $justify="space-between">
              <Icon w={16} stroke="#b5b5b5"><path d="m2 2 12 12M14 2 2 14" /></Icon>
              <Icon w={18} stroke="#b5b5b5"><path d="m1.500 9 5 5.500L16.500 3" /></Icon>
              <Fx>fx</Fx>
            </Field>
            <Field><input type="text" aria-label="Formula" /><Chevron /></Field>
          </FormulaRow>

          <Work>
            <SheetArea>
              <Grid>
                <colgroup>
                  <col width="26" /><col width="210" /><col width="239" />
                  {columns.slice(2).map((c) => <col key={c} width="64" />)}
                </colgroup>
                <thead>
                  <tr>
                    <Corner><Icon w={12} stroke="none"><path d="M12 0v11H1z" fill="#dadada" /></Icon></Corner>
                    {columns.map((c) => <ColHead key={c} $active={c === "J"}>{c}</ColHead>)}
                  </tr>
                </thead>
                <tbody>
                  {rowNumbers.map((r) => (
                    <tr key={r}>
                      <RowHead $h={r < 4 ? 35 : 20} $active={r === 7}>{r <= lastNumberedRow && r}</RowHead>
                      {columns.map((c) => <Cell key={c} {...cellProps(r, c)} />)}
                    </tr>
                  ))}
                </tbody>
              </Grid>
              <FormButton type="button" $x={616} $y={32} $w={227} $h={70}>All Stocks Analysis</FormButton>
              <FormButton type="button" $x={615} $y={104} $w={227} $h={62} $pressed>All Stocks Analysis - Refactored</FormButton>
              <FormButton type="button" tabIndex={-1} aria-hidden="true" $x={615} $y={193} $w={227} $h={62} />
            </SheetArea>
            <VScroll><Arrow dir="up" /><VThumb /><VRest /><Arrow dir="down" /></VScroll>
          </Work>

          <SheetBar>
            <SheetNav><Arrow dir="prev" color="#bdbdbd" /><Arrow dir="next" color="#bdbdbd" /></SheetNav>
            <SheetTab type="button" $w={52}>2017</SheetTab>
            <SheetTab type="button" $w={52}>2018</SheetTab>
            <SheetTab type="button" $w={100}>DQ_Analysis</SheetTab>
            <SheetTab type="button" $w={141} $active>All_Stocks_Analysis</SheetTab>
            <AddSheet type="button" aria-label="New sheet"><Icon w={16} stroke="#666"><circle cx="8" cy="8" r="7.500" /><path d="M4 8h8M8 4v8" strokeWidth="1.500" /></Icon></AddSheet>
            <Spacer />
            <Splitter><Dots color="#b5b5b5" /></Splitter>
            <HScroll><Arrow dir="left" /><HThumb /><HRest /><Arrow dir="right" /></HScroll>
          </SheetBar>

          <StatusBar>
            <StatusText>Ready</StatusText>
            <StatusItem type="button" $ml={19} aria-label="Record macro"><Icon w={15} h={14}><path d="M6 12.500H.5V.5h13V5M.5 3.500h13M3 6.500h3M3 9.500h2" /><circle cx="10" cy="9" r="4" /><circle cx="10" cy="9" r="1.700" fill="#333" /></Icon></StatusItem>
            <StatusItem type="button" $ml={17}>
              <Icon w={15}><circle cx="7" cy="3" r="1.700" /><path d="m1 3.500 4 2V9l-2 5.500 2 .500 2-4.500M13 3.500l-4 2v3M9 12l2 2 4-5M1 3.500c0-2 2-2 3-1M13 3.500c0-2-2-2-3-1" /></Icon>
              <StatusText>Accessibility: Good to go</StatusText>
            </StatusItem>
            <Spacer />
            <StatusItem type="button">
              <Icon w={15}><path d="M6 11.500H.5v-9h13V6M3 14.500h4" /><circle cx="11" cy="11" r="2.500" /><path d="M11 6.500v2M11 13.500v2M7 8.700l1.700 1M13.300 12.300l1.700 1M15 8.700l-1.700 1M7 13.300l1.700-1" strokeWidth="1.400" /></Icon>
              <StatusText>Display Settings</StatusText>
            </StatusItem>
            <ViewGroup>
              <ViewButton type="button" $active aria-label="Normal"><Icon w={14} h={13} stroke="#222"><path d="M.5.5h12v12H.5zM4.500.5v12M8.500.5v12M.5 4.500h12M.5 8.500h12" /></Icon></ViewButton>
              <ViewButton type="button" aria-label="Page layout"><Icon w={14} h={13} stroke="#222"><path d="M.5.5h13v12H.5zM3.500 2.500h7v8h-7zM5 4.500h4M5 6.500h4M5 8.500h4" /></Icon></ViewButton>
              <ViewButton type="button" aria-label="Page break"><Icon w={14} h={13} stroke="#222"><path d="M.5.5h13v12H.5zM4.500.5v7M9.500.5v7h-9" /></Icon></ViewButton>
            </ViewGroup>
            <button type="button" aria-label="Zoom out"><Icon w={11}><path d="M1 5.500h8" /></Icon></button>
            <ZoomRange type="range" min="10" max="190" defaultValue="100" aria-label="Zoom" />
            <button type="button" aria-label="Zoom in"><Icon w={9}><path d="M0 4.500h9M4.500 0v9" /></Icon></button>
            <ZoomValue>100%</ZoomValue>
          </StatusBar>

          <Dialog role="dialog" aria-labelledby="msg-title">
            <DialogTitle>
              <span id="msg-title">Microsoft Excel</span>
              <button type="button" aria-label="Close"><Icon w={11} stroke="#fff"><path d="m.5.500 10 10M10.500.500l-10 10" /></Icon></button>
            </DialogTitle>
            <DialogText>This code ran in 0.3027344 seconds for the year 2017</DialogText>
            <DialogFooter><OkButton type="button">OK</OkButton></DialogFooter>
          </Dialog>
        </Window>

        <Taskbar>
          {taskIcons.map((t) => (
            <Task key={t.name} type="button" aria-label={t.name} $running={t.running} $active={t.active}>{t.icon}</Task>
          ))}
          <Spacer />
          <Tray $gap={16}>
            <Icon w={16} stroke="#222"><path d="m2.500 10.500 5.500-6 5.500 6" strokeWidth="1.300" /></Icon>
            <Icon w={16} stroke="#222"><path d="M4 12.500c-4 0-4-5-.5-5C4 2 11 2 12 6.500c4 0 4 6 .5 6z" fill="#8b8b8b" /><path d="M4 12c-3 0-3-3 0-4 3 0 4-1 6 1l3 3z" fill="#eee" stroke="none" /></Icon>
            <Tray $gap={6}>
              <Icon w={16} stroke="#222"><path d="M1 6.500c4-4.500 10-4.500 14 0M3 8.500c3-3 7-3 10 0M5.500 10.500c1.500-1.500 3.500-1.500 5 0" /><circle cx="8" cy="12.500" r="1.200" fill="#222" /></Icon>
              <Icon w={16} stroke="#222"><path d="M1.500 6h2.500l4-4v12L4 10H1.500z" /><path d="M10 6c1 1 1 3 0 4" /><path d="M11.500 4c2.500 2 2.500 6 0 8M13.500 2.500c3 3 3 8 0 11" stroke="#b4b4b6" /></Icon>
              <Icon w={18} h={16} stroke="#222"><path d="M6.500 3.500h8v9h-10V8.500" /><path d="M7 5h6v6H6V7.500z" fill="#222" stroke="none" /><path d="M16 6.500v3" strokeWidth="2" /><path d="M2 1v3M5 1v3M3.500 7v4" /><path d="M1 3.500h5V6L4.500 7.500h-2L1 6z" fill="#222" stroke="none" /></Icon>
            </Tray>
          </Tray>
          <Clock>{"3:03 AM\n3/30/2022"}</Clock>
          <Icon w={15} stroke="#222"><path d="M8 1.500c5 2 6 7 4 10-3 4-8 3-10 0 4 0 8-4 6-10z" /></Icon>
        </Taskbar>
        <Bezel />
      </Desktop>
      <ScreenEdge />
    </Screen>
  );
}
